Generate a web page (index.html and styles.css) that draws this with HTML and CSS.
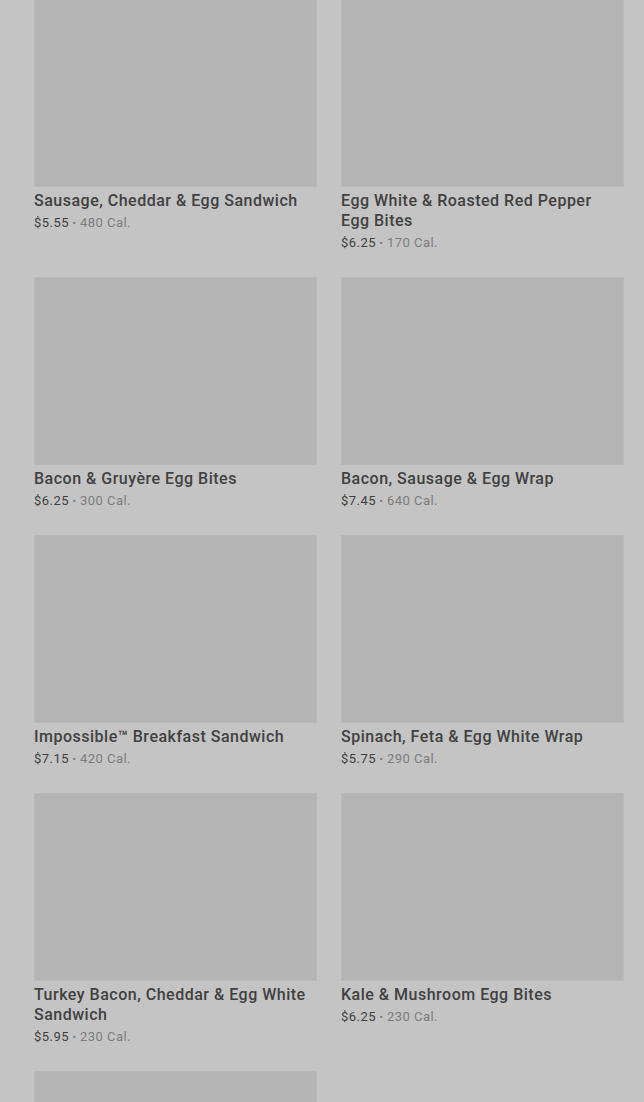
FILE: index.html
```html
<!DOCTYPE html>
<html lang="en">
<head>
  <meta charset="UTF-8">
  <meta name="viewport" content="width=device-width, initial-scale=1.0">
  <title>Hot Breakfast</title>
  <link rel="stylesheet" href="styles.css">
</head>
<body>
  <div class="menu-grid">
    <div class="product">
      <div class="product-image"></div>
      <h3 class="product-name">Sausage, Cheddar &amp; Egg Sandwich</h3>
      <p class="product-meta"><span class="price">$5.55</span> <span class="dot">•</span> <span class="cal">480 Cal.</span></p>
    </div>
    <div class="product">
      <div class="product-image"></div>
      <h3 class="product-name">Egg White &amp; Roasted Red Pepper Egg Bites</h3>
      <p class="product-meta"><span class="price">$6.25</span> <span class="dot">•</span> <span class="cal">170 Cal.</span></p>
    </div>
    <div class="product">
      <div class="product-image"></div>
      <h3 class="product-name">Bacon &amp; Gruyère Egg Bites</h3>
      <p class="product-meta"><span class="price">$6.25</span> <span class="dot">•</span> <span class="cal">300 Cal.</span></p>
    </div>
    <div class="product">
      <div class="product-image"></div>
      <h3 class="product-name">Bacon, Sausage &amp; Egg Wrap</h3>
      <p class="product-meta"><span class="price">$7.45</span> <span class="dot">•</span> <span class="cal">640 Cal.</span></p>
    </div>
    <div class="product">
      <div class="product-image"></div>
      <h3 class="product-name">Impossible™ Breakfast Sandwich</h3>
      <p class="product-meta"><span class="price">$7.15</span> <span class="dot">•</span> <span class="cal">420 Cal.</span></p>
    </div>
    <div class="product">
      <div class="product-image"></div>
      <h3 class="product-name">Spinach, Feta &amp; Egg White Wrap</h3>
      <p class="product-meta"><span class="price">$5.75</span> <span class="dot">•</span> <span class="cal">290 Cal.</span></p>
    </div>
    <div class="product">
      <div class="product-image"></div>
      <h3 class="product-name">Turkey Bacon, Cheddar &amp; Egg White Sandwich</h3>
      <p class="product-meta"><span class="price">$5.95</span> <span class="dot">•</span> <span class="cal">230 Cal.</span></p>
    </div>
    <div class="product">
      <div class="product-image"></div>
      <h3 class="product-name">Kale &amp; Mushroom Egg Bites</h3>
      <p class="product-meta"><span class="price">$6.25</span> <span class="dot">•</span> <span class="cal">230 Cal.</span></p>
    </div>
    <div class="product">
      <div class="product-image"></div>
    </div>
  </div>
</body>
</html>
```

FILE: styles.css
```css
body {
  margin: 0;
  background-color: #c4c4c4;
  font-family: Roboto, "Liberation Sans", Arial, sans-serif;
  color: #3b3b3b;
  overflow: hidden;
}
.menu-grid {
  display: grid;
  grid-template-columns: 283px 283px;
  column-gap: 24px;
  row-gap: 25px;
  margin-top: -1px;
  padding: 0 20px 0 34px;
}
.product-image {
  height: 188px;
  background-color: #b4b4b4;
  box-shadow: inset 0 0 0 1px #b9b9b9;
}
.product-name {
  margin: 4px 0 0;
  font-size: 16px;
  line-height: 20px;
  font-weight: 500;
  letter-spacing: 0.5px;
  color: #414141;
}
.product-meta {
  margin: 3px 0 0;
  font-size: 13px;
  line-height: 18px;
  letter-spacing: 0.45px;
}
.price {
  color: #3f3f3f;
}
.dot {
  font-size: 10px;
  line-height: 1;
  color: #7a7a7a;
}
.cal {
  color: #7c7c7c;
}
```
